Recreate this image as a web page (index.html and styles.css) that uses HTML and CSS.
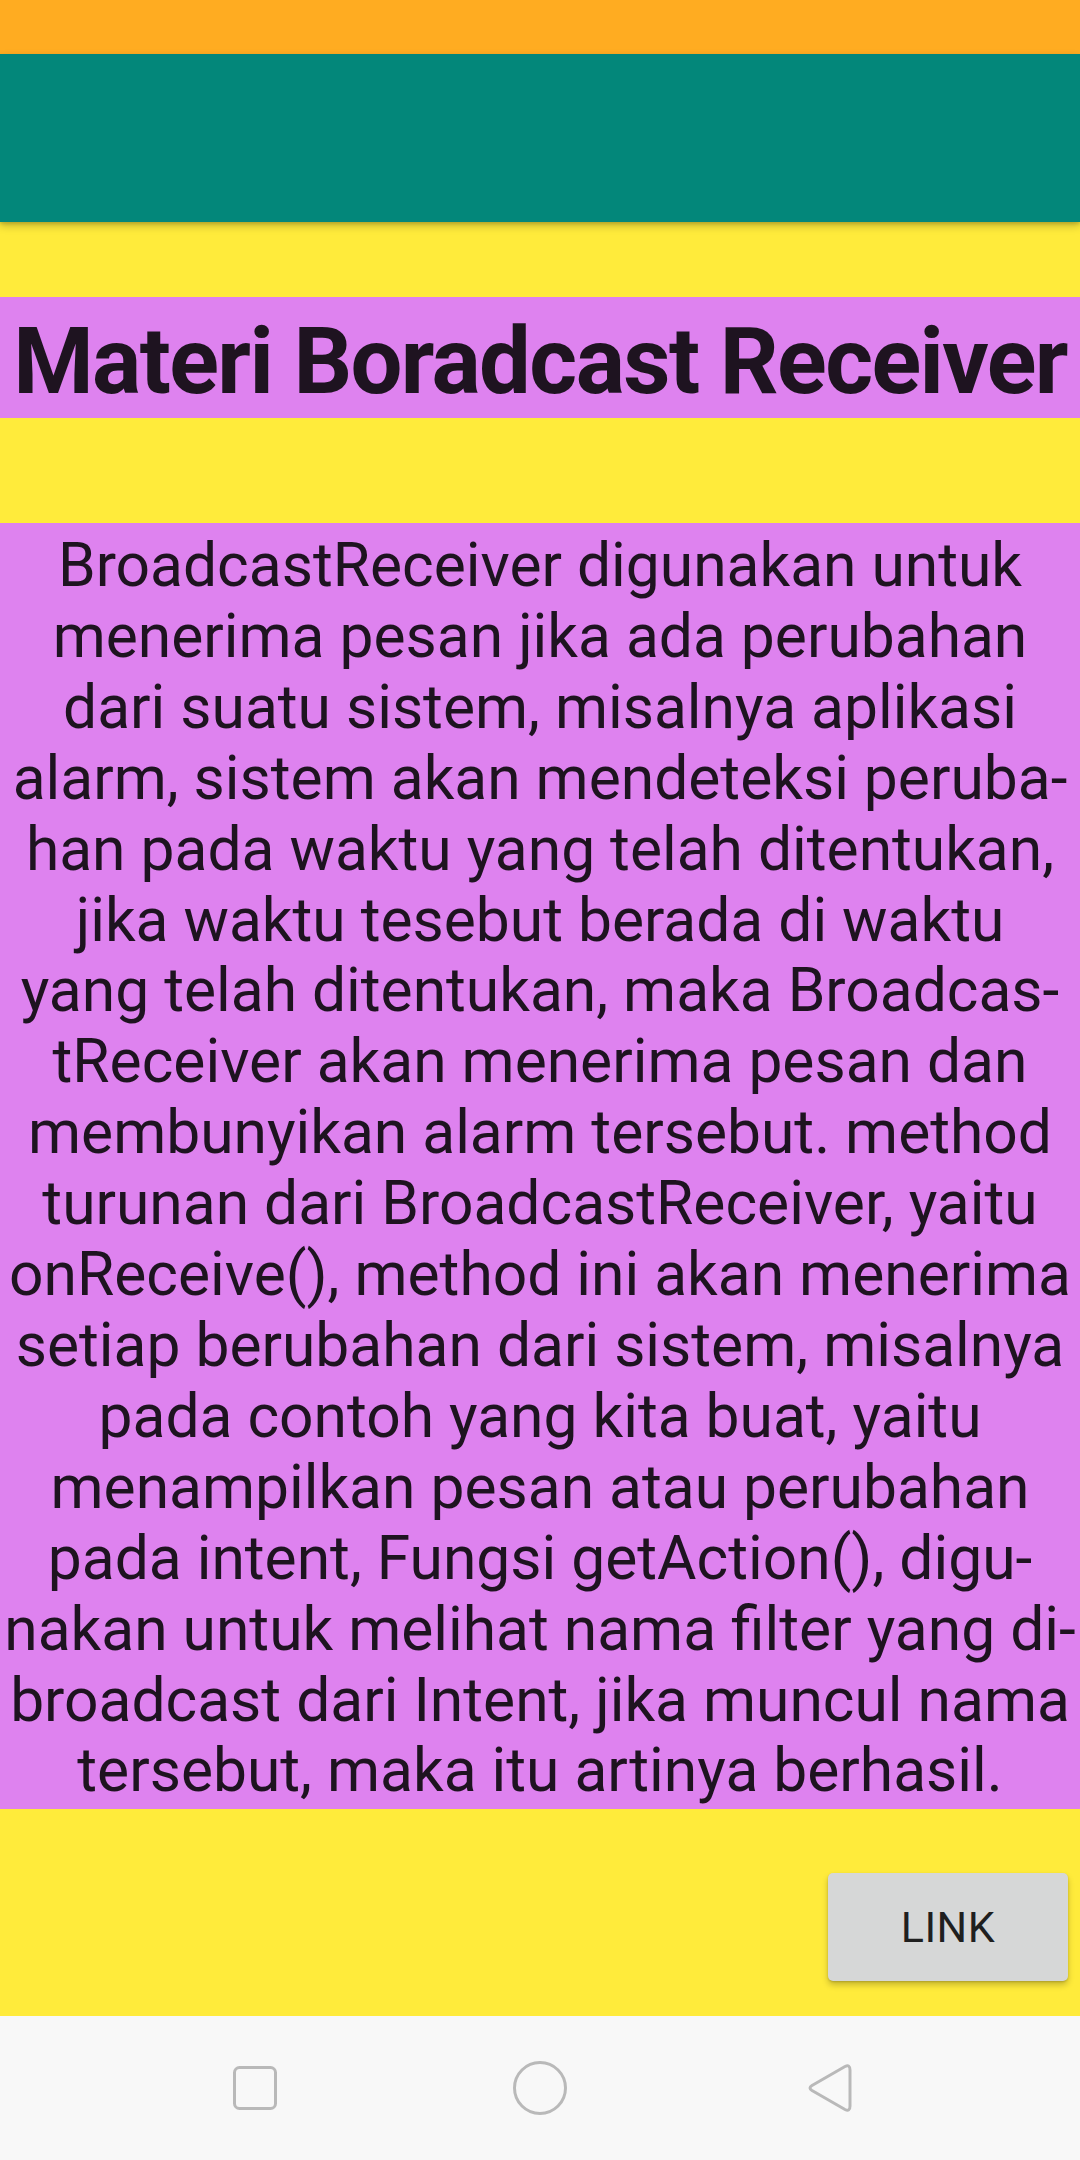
FILE: index.html
```html
<!DOCTYPE html>
<html lang="id">
<head>
<meta charset="utf-8">
<title>Materi Boradcast Receiver</title>
<link rel="stylesheet" href="styles.css">
</head>
<body>
<div class="screen">
  <div class="status-bar"></div>
  <div class="toolbar"></div>
  <main class="content">
    <h1 class="title">Materi Boradcast Receiver</h1>
    <p class="body-text">BroadcastReceiver digunakan untuk<br>menerima pesan jika ada perubahan<br>dari suatu sistem, misalnya aplikasi<br>alarm, sistem akan mendeteksi peruba-<br>han pada waktu yang telah ditentukan,<br>jika waktu tesebut berada di waktu<br>yang telah ditentukan, maka Broadcas-<br>tReceiver akan menerima pesan dan<br>membunyikan alarm tersebut. method<br>turunan dari BroadcastReceiver, yaitu<br>onReceive(), method ini akan menerima<br>setiap berubahan dari sistem, misalnya<br>pada contoh yang kita buat, yaitu<br>menampilkan pesan atau perubahan<br>pada intent, Fungsi getAction(), digu-<br>nakan untuk melihat nama filter yang di-<br>broadcast dari Intent, jika muncul nama<br>tersebut, maka itu artinya berhasil.</p>
    <div class="actions">
      <button class="link-btn">LINK</button>
    </div>
  </main>
  <nav class="nav-bar">
    <svg class="nav-square" width="44" height="44" viewBox="0 0 44 44"><rect x="1.5" y="1.5" width="41" height="41" rx="5" fill="none" stroke="#b9b9b9" stroke-width="3"/></svg>
    <svg class="nav-circle" width="54" height="54" viewBox="0 0 54 54"><circle cx="27" cy="27" r="25.5" fill="none" stroke="#b9b9b9" stroke-width="3"/></svg>
    <svg class="nav-back" width="46" height="52" viewBox="0 0 46 52"><path d="M5 23.5 L38 4.5 Q43 2 43 8 L43 44 Q43 50 38 47.5 L5 28.5 Q1 26 5 23.5 Z" fill="none" stroke="#b9b9b9" stroke-width="3" stroke-linejoin="round"/></svg>
  </nav>
</div>
</body>
</html>
```

FILE: styles.css
```css
html, body {
  margin: 0;
  padding: 0;
}

body {
  width: 1080px;
  height: 2160px;
  overflow: hidden;
  font-family: Roboto, "Noto Sans", "Liberation Sans", sans-serif;
}

.screen {
  width: 1080px;
  height: 2160px;
  display: flex;
  flex-direction: column;
  background: #ffeb3b;
}

.status-bar {
  height: 54px;
  background: #ffac21;
  flex-shrink: 0;
}

.toolbar {
  height: 168px;
  background: #03877a;
  flex-shrink: 0;
  position: relative;
  z-index: 1;
  box-shadow: 0 4px 8px rgba(0, 0, 0, 0.22), 0 2px 3px rgba(0, 0, 0, 0.12);
}

.content {
  flex: 1;
  display: flex;
  flex-direction: column;
  padding-top: 75px;
}

.title {
  margin: 0;
  height: 121px;
  box-sizing: border-box;
  padding-top: 11px;
  line-height: 108px;
  background: #de82ef;
  color: #1e1320;
  font-size: 92px;
  font-weight: 700;
  letter-spacing: -1.6px;
  text-align: center;
  white-space: nowrap;
}

.body-text {
  margin: 105px 0 0 0;
  padding: 8px 0 2px 0;
  background: #de82ef;
  color: #1e1320;
  font-size: 60.5px;
  line-height: 70.9px;
  text-align: center;
  white-space: nowrap;
}

.actions {
  display: flex;
  justify-content: flex-end;
  padding: 64px 12px 0 0;
}

.link-btn {
  width: 240px;
  height: 108px;
  border: none;
  border-radius: 5px;
  background: #d6d7d7;
  color: #1f1f1f;
  font-family: Roboto, "Liberation Sans", sans-serif;
  font-size: 43px;
  letter-spacing: 0.5px;
  padding: 0;
  box-shadow: 0 4px 6px rgba(0, 0, 0, 0.22), 0 1px 2px rgba(0, 0, 0, 0.15);
}

.nav-bar {
  height: 144px;
  flex-shrink: 0;
  background: #f8f8f8;
  display: flex;
  align-items: center;
  padding-left: 233px;
}

.nav-circle {
  margin-left: 236px;
}

.nav-back {
  margin-left: 240px;
}
```
